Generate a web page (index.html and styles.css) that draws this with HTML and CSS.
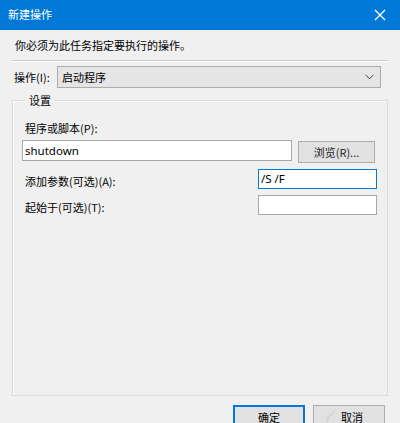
FILE: index.html
```html
<!DOCTYPE html>
<html lang="zh-CN">
<head>
<meta charset="utf-8">
<title>新建操作</title>
<link rel="stylesheet" href="styles.css">
</head>
<body>
<div class="dialog">
  <div class="titlebar">
    <span class="title">新建操作</span>
    <span class="close">
      <svg width="12" height="12" viewBox="0 0 12 12"><path d="M1 1 L11 11 M11 1 L1 11" stroke="#fff" stroke-width="1.3" fill="none"/></svg>
    </span>
  </div>
  <div class="main">
    <div class="intro">你必须为此任务指定要执行的操作。</div>
    <div class="sep"></div>
    <div class="action-row">
      <span class="action-label">操作(I):</span>
      <div class="select">
        <span>启动程序</span>
        <svg width="9" height="6" viewBox="0 0 9 6"><path d="M0.5 0.8 L4.5 4.8 L8.5 0.8" stroke="#444" stroke-width="1" fill="none"/></svg>
      </div>
    </div>
    <fieldset class="group">
      <legend>设置</legend>
      <div class="field-label">程序或脚本(P):</div>
      <div class="program-row">
        <div class="input wide">shutdown</div>
        <div class="btn browse">浏览(R)...</div>
      </div>
      <div class="opt-row">
        <span class="opt-label">添加参数(可选)(A):</span>
        <div class="input narrow focus">/S /F</div>
      </div>
      <div class="opt-row">
        <span class="opt-label">起始于(可选)(T):</span>
        <div class="input narrow"></div>
      </div>
    </fieldset>
    <div class="footer">
      <div class="btn ok">确定</div>
      <div class="btn cancel">
        <svg class="mark" width="10" height="12" viewBox="0 0 10 12"><path d="M9 1 C6 3 4 6 2 7 C4 8 3 10 1 11" stroke="#cfcfcf" stroke-width="1.2" fill="none"/></svg>
        <span>取消</span>
      </div>
    </div>
  </div>
</div>
</body>
</html>
```

FILE: styles.css
```css
* { box-sizing: border-box; }
html, body {
  margin: 0;
  padding: 0;
}
body {
  width: 400px;
  height: 423px;
  overflow: hidden;
  background: #f0f0f0;
  font-family: "Noto Sans CJK SC", "Noto Sans", sans-serif;
  font-size: 11px;
  color: #000;
}
.dialog {
  width: 400px;
  height: 423px;
}
.titlebar {
  height: 30px;
  background: #0078d7;
  color: #fff;
  display: flex;
  align-items: center;
  justify-content: space-between;
  padding-left: 8px;
}
.title {
  line-height: 14px;
  margin-top: -2px;
}
.close {
  width: 40px;
  display: flex;
  justify-content: center;
  align-items: center;
  margin-right: 0;
}
.main {
  padding: 0 12px;
}
.intro {
  height: 30px;
  display: flex;
  align-items: center;
  padding-left: 3px;
  line-height: 14px;
}
.sep {
  height: 2px;
  border-top: 1px solid #cdcdcd;
  border-bottom: 1px solid #ffffff;
}
.action-row {
  display: flex;
  align-items: center;
  margin-top: 4px;
  height: 22px;
}
.action-label {
  width: 45px;
  padding-left: 2px;
  line-height: 14px;
}
.select {
  flex: 1;
  margin-right: 7px;
  height: 22px;
  background: #e5e5e5;
  border: 1px solid #acacac;
  display: flex;
  align-items: center;
  justify-content: space-between;
  padding: 0 6px 0 4px;
  line-height: 14px;
}
.group {
  margin: 5px 0 0 0;
  padding: 0 9px;
  height: 303px;
  border: 1px solid #dcdcdc;
  box-shadow: inset 1px 1px 0 #fbfbfb;
  min-width: 0;
}
.group legend {
  padding: 0 3px;
  margin-left: 4px;
  line-height: 14px;
}
.field-label {
  margin-top: 14px;
  padding-left: 3px;
  line-height: 14px;
}
.program-row {
  display: flex;
  align-items: flex-start;
  margin-top: 5px;
  height: 23px;
}
.input {
  background: #fff;
  border: 1px solid #a8a8a8;
  height: 21px;
  padding: 0 2px;
  line-height: 19px;
  font-family: "Noto Sans", "Noto Sans CJK SC", sans-serif;
  font-size: 11.5px;
}
.input.wide {
  width: 270px;
}
.input.narrow {
  width: 119px;
  height: 20px;
  line-height: 18px;
}
.input.focus {
  border-color: #0078d7;
}
.btn {
  background: #e1e1e1;
  border: 1px solid #adadad;
  display: flex;
  align-items: center;
  justify-content: center;
  line-height: 14px;
}
.browse {
  width: 77px;
  height: 22px;
  margin-left: 6px;
  margin-top: 1px;
  color: #222;
}
.opt-row {
  display: flex;
  align-items: flex-start;
  justify-content: space-between;
  margin-top: 6px;
  height: 20px;
}
.program-row + .opt-row {
  margin-top: 6px;
}
.opt-label {
  padding-left: 3px;
  padding-top: 5px;
  line-height: 14px;
}
.opt-row .input {
  margin-right: 1px;
}
.footer {
  display: flex;
  justify-content: flex-end;
  gap: 8px;
  margin-top: 9px;
  padding-right: 3px;
}
.footer .btn {
  width: 72px;
  height: 24px;
}
.ok {
  border: 2px solid #0078d7;
}
.cancel {
  position: relative;
  gap: 6px;
}
.cancel .mark {
  margin-left: -10px;
}
```
